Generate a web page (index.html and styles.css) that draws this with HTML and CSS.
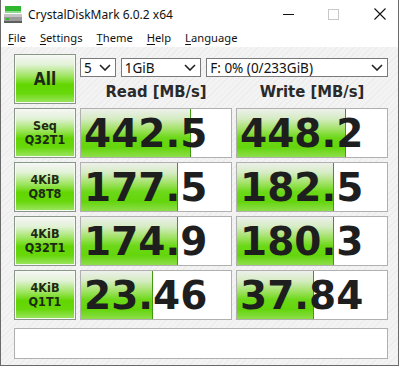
FILE: index.html
```html
<!DOCTYPE html>
<html lang="en">
<head>
    <meta charset="UTF-8">
    <title>CrystalDiskMark 6.0.2 x64</title>
    <link rel="stylesheet" href="styles.css">
</head>
<body>
    <div class="window">
        <div class="titlebar">
            <svg class="app-icon" width="19" height="18" viewBox="0 0 19 18">
                <rect x="1" y="0" width="16" height="5" fill="#2fb82f"/>
                <rect x="1" y="5" width="16" height="2" fill="#8fd88f"/>
                <rect x="0" y="8" width="18" height="9" fill="#9a9a9a"/>
                <rect x="0" y="8" width="18" height="3" fill="#c4c4c4"/>
                <rect x="0" y="15" width="18" height="2" fill="#5e5e5e"/>
                <rect x="2" y="12" width="3" height="2" fill="#2fb82f"/>
            </svg>
            <span class="title">CrystalDiskMark 6.0.2 x64</span>
            <div class="controls">
                <svg class="ctl-min" width="11" height="11" viewBox="0 0 11 11"><line x1="0" y1="5.5" x2="11" y2="5.5" stroke="#111" stroke-width="1"/></svg>
                <svg class="ctl-max" width="11" height="11" viewBox="0 0 11 11"><rect x="0.5" y="0.5" width="10" height="10" fill="none" stroke="#c8c8c8" stroke-width="1"/></svg>
                <svg class="ctl-close" width="12" height="12" viewBox="0 0 12 12"><path d="M0.5 0.5 L11.5 11.5 M11.5 0.5 L0.5 11.5" stroke="#111" stroke-width="1.1"/></svg>
            </div>
        </div>
        <div class="menubar">
            <span><u>F</u>ile</span>
            <span><u>S</u>ettings</span>
            <span><u>T</u>heme</span>
            <span><u>H</u>elp</span>
            <span><u>L</u>anguage</span>
        </div>
        <div class="client">
            <div class="grid">
                <div class="test-btn all">All</div>
                <div class="top-right">
                    <div class="selects">
                        <div class="select sel-count">5<svg class="chev" width="12" height="7" viewBox="0 0 12 7"><polyline points="1,1 6,6 11,1" fill="none" stroke="#222" stroke-width="1.6"/></svg></div>
                        <div class="select sel-size">1GiB<svg class="chev" width="12" height="7" viewBox="0 0 12 7"><polyline points="1,1 6,6 11,1" fill="none" stroke="#222" stroke-width="1.6"/></svg></div>
                        <div class="select sel-drive">F: 0% (0/233GiB)<svg class="chev" width="12" height="7" viewBox="0 0 12 7"><polyline points="1,1 6,6 11,1" fill="none" stroke="#222" stroke-width="1.6"/></svg></div>
                    </div>
                    <div class="headers">
                        <div>Read [MB/s]</div>
                        <div>Write [MB/s]</div>
                    </div>
                </div>

                <div class="test-btn">Seq<br>Q32T1</div>
                <div class="result"><div class="bar" style="width: 109px"></div><span>442.5</span></div>
                <div class="result"><div class="bar" style="width: 108px"></div><span>448.2</span></div>

                <div class="test-btn">4KiB<br>Q8T8</div>
                <div class="result"><div class="bar" style="width: 96px"></div><span>177.5</span></div>
                <div class="result"><div class="bar" style="width: 96px"></div><span>182.5</span></div>

                <div class="test-btn">4KiB<br>Q32T1</div>
                <div class="result"><div class="bar" style="width: 96px"></div><span>174.9</span></div>
                <div class="result"><div class="bar" style="width: 96px"></div><span>180.3</span></div>

                <div class="test-btn">4KiB<br>Q1T1</div>
                <div class="result"><div class="bar" style="width: 71px"></div><span>23.46</span></div>
                <div class="result"><div class="bar" style="width: 76px"></div><span>37.84</span></div>
            </div>
            <div class="comment"></div>
        </div>
    </div>
</body>
</html>
```

FILE: styles.css
```css
body {
    margin: 0;
    background: #ffffff;
    font-family: "Noto Sans", sans-serif;
}
.window {
    width: 397px;
    height: 365px;
    border-left: 1px solid #6a6a6a;
    border-right: 1px solid #6a6a6a;
    border-bottom: 1px solid #6a6a6a;
    display: flex;
    flex-direction: column;
    background: #fff;
}
.titlebar {
    height: 28px;
    display: flex;
    align-items: center;
    background: #fff;
}
.app-icon {
    margin-left: 3px;
    margin-right: 5px;
    margin-top: 1px;
}
.title {
    font-size: 12px;
    color: #111;
}
.controls {
    margin-left: auto;
    display: flex;
    align-items: center;
    margin-right: 12px;
}
.ctl-min {
    margin-right: 34px;
}
.ctl-max {
    margin-right: 35px;
}
.menubar {
    height: 19px;
    display: flex;
    align-items: center;
    gap: 14px;
    padding-left: 7px;
    font-size: 11.2px;
    color: #111;
}
.menubar u {
    text-decoration-thickness: 1px;
    text-underline-offset: 2px;
}
.client {
    flex: 1;
    padding: 7px 0 0 13px;
    background-color: #f1f1f1;
    background-image: repeating-linear-gradient(-45deg, #f3f3f3 0 3px, #ececec 3px 4px);
}
.grid {
    display: grid;
    grid-template-columns: 62px 152px 152px;
    grid-auto-rows: 50px;
    gap: 4px;
}
.top-right {
    grid-column: 2 / 4;
    display: flex;
    flex-direction: column;
}
.selects {
    display: flex;
    gap: 5px;
    margin-top: 4px;
}
.select {
    height: 19px;
    box-sizing: border-box;
    border: 1px solid #7a7a7a;
    background: #fff;
    display: flex;
    align-items: center;
    justify-content: space-between;
    padding: 0 4px 0 3px;
    font-size: 13.5px;
    color: #111;
}
.sel-count { width: 36px; }
.sel-size { width: 81px; }
.sel-drive { width: 183px; }
.headers {
    flex: 1;
    display: grid;
    grid-template-columns: 152px 152px;
    gap: 4px;
    align-items: center;
    text-align: center;
    font-family: "DejaVu Sans Condensed", "DejaVu Sans", sans-serif;
    font-stretch: condensed;
    font-weight: bold;
    font-size: 16.5px;
    color: #2a2a2a;
    padding-top: 1px;
}
.test-btn {
    box-sizing: border-box;
    border: 1px solid #8c958c;
    box-shadow: inset 0 0 0 1px #f4fbef;
    background: linear-gradient(to bottom, #f6f6f6 0%, #e2f2d6 20%, #9be45a 45%, #62d600 62%, #68d80c 80%, #9fe566 100%);
    display: flex;
    align-items: center;
    justify-content: center;
    text-align: center;
    font-family: "DejaVu Sans Condensed", "DejaVu Sans", sans-serif;
    font-stretch: condensed;
    font-weight: bold;
    font-size: 12.5px;
    line-height: 14px;
    color: #1c2a14;
}
.test-btn.all {
    font-size: 17px;
}
.result {
    position: relative;
    box-sizing: border-box;
    border: 1px solid #b0b0b0;
    background: #fff;
    display: flex;
    align-items: center;
    overflow: hidden;
}
.bar {
    position: absolute;
    left: 0;
    top: 0;
    bottom: 0;
    border-right: 1px solid #3f9a12;
    background: linear-gradient(to bottom, #edf0ea 0%, #d6ecc4 20%, #a2e266 42%, #6cd918 60%, #64d50c 80%, #8ede4a 100%);
}
.result span {
    position: relative;
    padding-left: 3px;
    font-family: "DejaVu Sans", sans-serif;
    font-weight: bold;
    font-size: 39px;
    line-height: 1;
    color: #1e1e1e;
}
.comment {
    margin-top: 8px;
    width: 374px;
    height: 31px;
    box-sizing: border-box;
    border: 1px solid #b0b0b0;
    background: #fff;
}
```
